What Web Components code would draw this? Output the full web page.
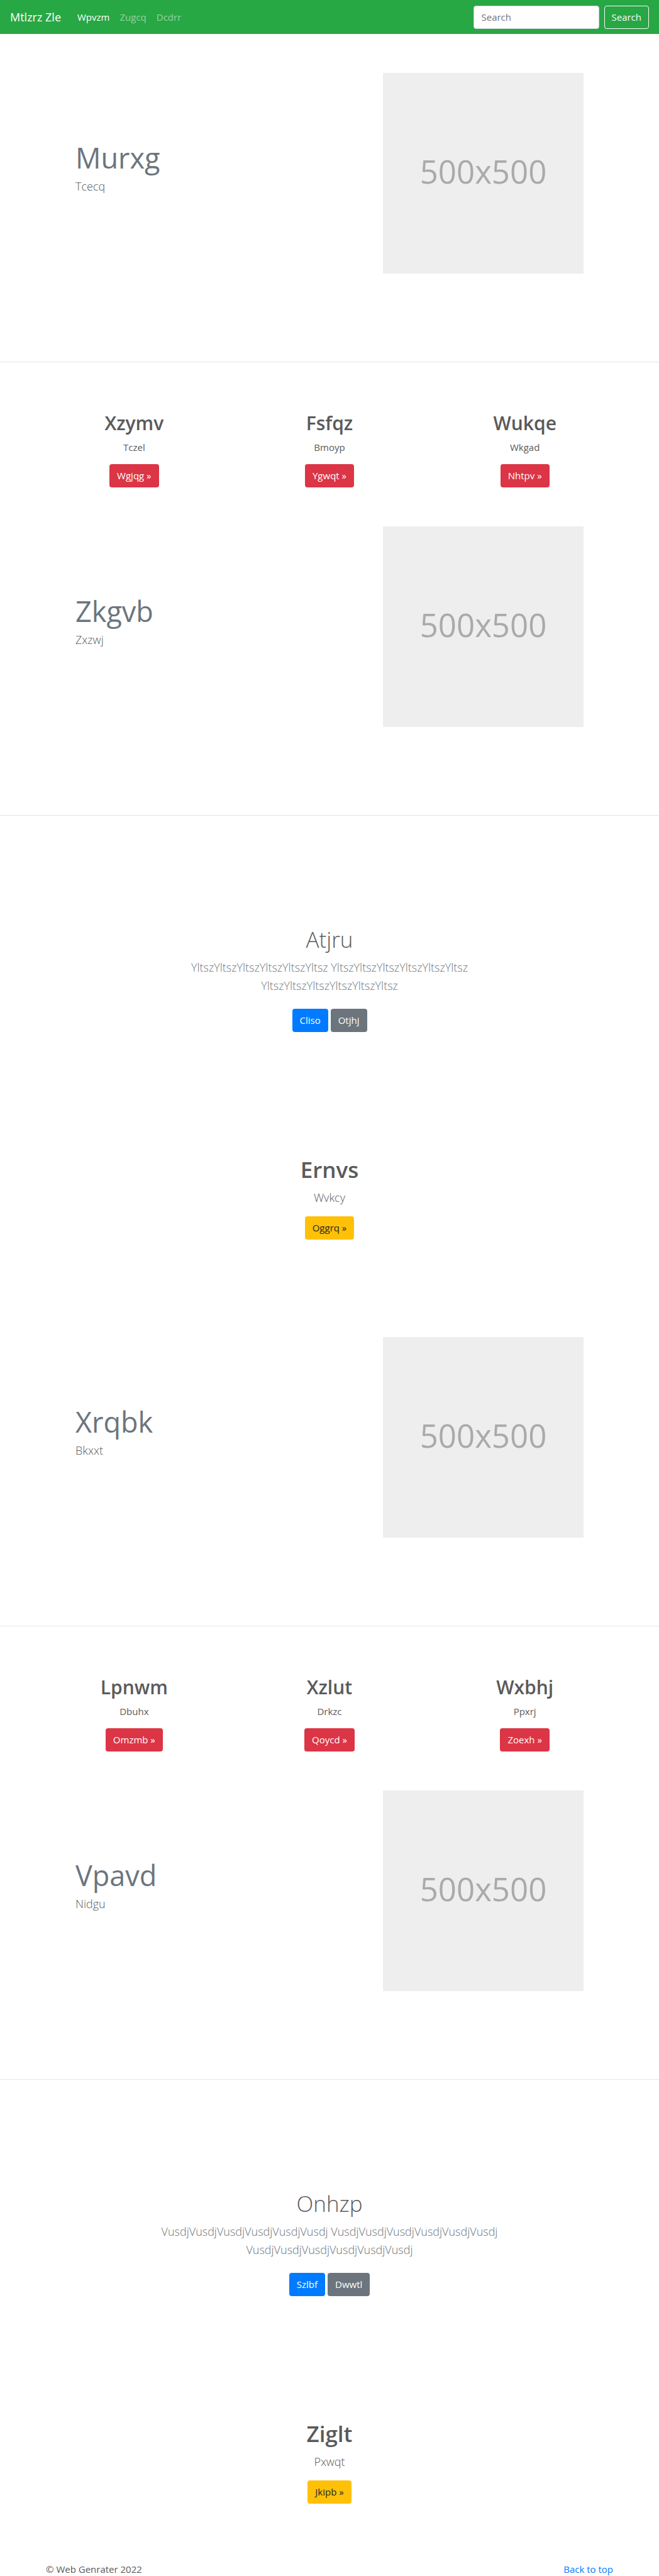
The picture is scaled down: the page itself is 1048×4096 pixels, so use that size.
<!DOCTYPE html>
<html lang="en">
<head>
<meta charset="utf-8">
<meta name="viewport" content="width=device-width, initial-scale=1">
<title>Mtlzrz Zle</title>
<style>
html { background: #fff; }
body { margin: 0; font: 400 15px/24px "Open Sans", "Noto Sans", sans-serif; color: #5a5a5a; }
</style>
</head>
<body>
<site-nav brand="Mtlzrz Zle">
  <nav-link current>Wpvzm</nav-link>
  <nav-link>Zugcq</nav-link>
  <nav-link>Dcdrr</nav-link>
</site-nav>
<main>
  <feature-row><span slot="title">Murxg</span><span>Tcecq</span></feature-row>
  <card-row>
    <info-card heading="Xzymv" action="Wgjqg »">Tczel</info-card>
    <info-card heading="Fsfqz" action="Ygwqt »">Bmoyp</info-card>
    <info-card heading="Wukqe" action="Nhtpv »">Wkgad</info-card>
  </card-row>
  <feature-row><span slot="title">Zkgvb</span><span>Zxzwj</span></feature-row>
  <call-out heading="Atjru" light>
    YltszYltszYltszYltszYltszYltsz YltszYltszYltszYltszYltszYltsz YltszYltszYltszYltszYltszYltsz
    <link-button slot="actions" variant="primary">Cliso</link-button>
    <link-button slot="actions" variant="secondary">Otjhj</link-button>
  </call-out>
  <call-out heading="Ernvs">
    Wvkcy
    <link-button slot="actions" variant="warning">Oggrq »</link-button>
  </call-out>

  <feature-row><span slot="title">Xrqbk</span><span>Bkxxt</span></feature-row>
  <card-row>
    <info-card heading="Lpnwm" action="Omzmb »">Dbuhx</info-card>
    <info-card heading="Xzlut" action="Qoycd »">Drkzc</info-card>
    <info-card heading="Wxbhj" action="Zoexh »">Ppxrj</info-card>
  </card-row>
  <feature-row><span slot="title">Vpavd</span><span>Nidgu</span></feature-row>
  <call-out heading="Onhzp" light>
    VusdjVusdjVusdjVusdjVusdjVusdj VusdjVusdjVusdjVusdjVusdjVusdj VusdjVusdjVusdjVusdjVusdjVusdj
    <link-button slot="actions" variant="primary">Szlbf</link-button>
    <link-button slot="actions" variant="secondary">Dwwtl</link-button>
  </call-out>
  <call-out heading="Ziglt">
    Pxwqt
    <link-button slot="actions" variant="warning">Jkipb »</link-button>
  </call-out>
</main>
<site-footer>© Web Genrater 2022</site-footer>

<script>
const define = (name, render) => customElements.define(name, class extends HTMLElement {
  constructor() {
    super();
    this.attachShadow({ mode: 'open' });
  }
  connectedCallback() {
    const template = document.createElement('template');
    template.innerHTML = '<style>*{box-sizing:border-box}h1,h2,p{margin:0}</style>' + render(this);
    this.shadowRoot.replaceChildren(template.content.cloneNode(true));
  }
});

define('nav-link', el => `
  <style>
    :host { display: block; }
    a { color: rgba(255,255,255,.5); text-decoration: none; }
    :host([current]) a { color: #fff; font-weight: 500; }
  </style>
  <a href="#"${el.hasAttribute('current') ? ' aria-current="page"' : ''}><slot></slot></a>`);

define('site-nav', el => `
  <style>
    :host { display: block; background: #28a745; }
    nav { display: flex; align-items: center; min-height: 54px; padding: 0 16px; }
    .brand { font-size: 18px; font-weight: 500; color: #fff; text-decoration: none; margin-right: 26px; }
    .links { display: flex; gap: 16px; flex: 1; }
    form { display: flex; gap: 8px; }
    input, button { font: inherit; height: 37px; padding: 0 12px; border-radius: 4px; margin: 0; }
    input { width: 200px; background: #fff; border: 1px solid #ced4da; color: #495057; }
    input::placeholder { color: #6c757d; opacity: 1; }
    button { background: transparent; border: 1px solid #f8f9fa; color: #f8f9fa; padding: 0 11px; }
  </style>
  <nav>
    <a class="brand" href="#">${el.getAttribute('brand')}</a>
    <div class="links"><slot></slot></div>
    <form role="search">
      <input type="text" placeholder="Search" aria-label="Search">
      <button type="button">Search</button>
    </form>
  </nav>`);

define('link-button', () => `
  <style>
    :host { display: block; }
    a { display: block; height: 37px; line-height: 36px; padding: 0 12px; border-radius: 4px;
        color: #fff; background: #dc3545; text-decoration: none; white-space: nowrap; }
    :host([variant=primary]) a { background: #007bff; }
    :host([variant=secondary]) a { background: #6c757d; }
    :host([variant=warning]) a { background: #ffc107; color: #212529; }
  </style>
  <a href="#"><slot></slot></a>`);

define('placeholder-image', () => `
  <style>
    :host { display: grid; place-items: center; aspect-ratio: 1; padding-bottom: 8px; box-sizing: border-box;
            background: #eee; color: #aaa; font-size: 51px; line-height: 60px; }
  </style>
  <span>500x500</span>`);

define('feature-row', () => `
  <style>
    :host { display: block; border-bottom: 1px solid #e5e5e5; padding: 62px 16px 140px; }
    .row { display: flex; justify-content: space-between; align-items: flex-start; max-width: 808px; margin: 0 auto; }
    .text { padding-top: 108px; }
    h2 { font-size: 45px; line-height: 54px; font-weight: 400; color: #6c757d; margin-bottom: 4px; }
    p { font-size: 18px; line-height: 29px; font-weight: 300; }
    placeholder-image { width: 319px; }
  </style>
  <div class="row">
    <div class="text"><h2><slot name="title"></slot></h2><p><slot></slot></p></div>
    <placeholder-image></placeholder-image>
  </div>`);

define('card-row', () => `
  <style>
    :host { display: grid; grid-template-columns: repeat(3, 1fr); max-width: 932px; margin: 0 auto; padding-top: 79px; }
  </style>
  <slot></slot>`);

define('info-card', el => `
  <style>
    :host { display: flex; flex-direction: column; align-items: center; text-align: center; }
    h2 { font-size: 30px; line-height: 36px; font-weight: 600; margin-bottom: 8px; }
    p { margin-bottom: 15px; }
  </style>
  <h2>${el.getAttribute('heading')}</h2>
  <p><slot></slot></p>
  <link-button>${el.getAttribute('action')}</link-button>`);

define('call-out', el => `
  <style>
    :host { display: flex; flex-direction: column; align-items: center; text-align: center; padding: 198px 16px 93px; }
    :host([light]) { padding: 176px 16px 0; }
    h1 { font-size: 35px; line-height: 42px; font-weight: 600; margin-bottom: 9px; }
    p { font-size: 18px; line-height: 29px; font-weight: 300; max-width: 620px; margin-bottom: 15px; }
    :host([light]) h1 { font-weight: 300; }
    :host([light]) p { color: #6c757d; margin-bottom: 22px; }
    .actions { display: flex; gap: 4px; }
  </style>
  <h1>${el.getAttribute('heading')}</h1>
  <p><slot></slot></p>
  <div class="actions"><slot name="actions"></slot></div>`);

define('site-footer', () => `
  <style>
    :host { display: block; }
    footer { display: flex; justify-content: space-between; max-width: 932px; margin: 0 auto; padding: 0 15px; line-height: 22px; }
    a { color: #007bff; text-decoration: none; }
  </style>
  <footer><span><slot></slot></span><a href="#">Back to top</a></footer>`);
</script>
</body>
</html>
